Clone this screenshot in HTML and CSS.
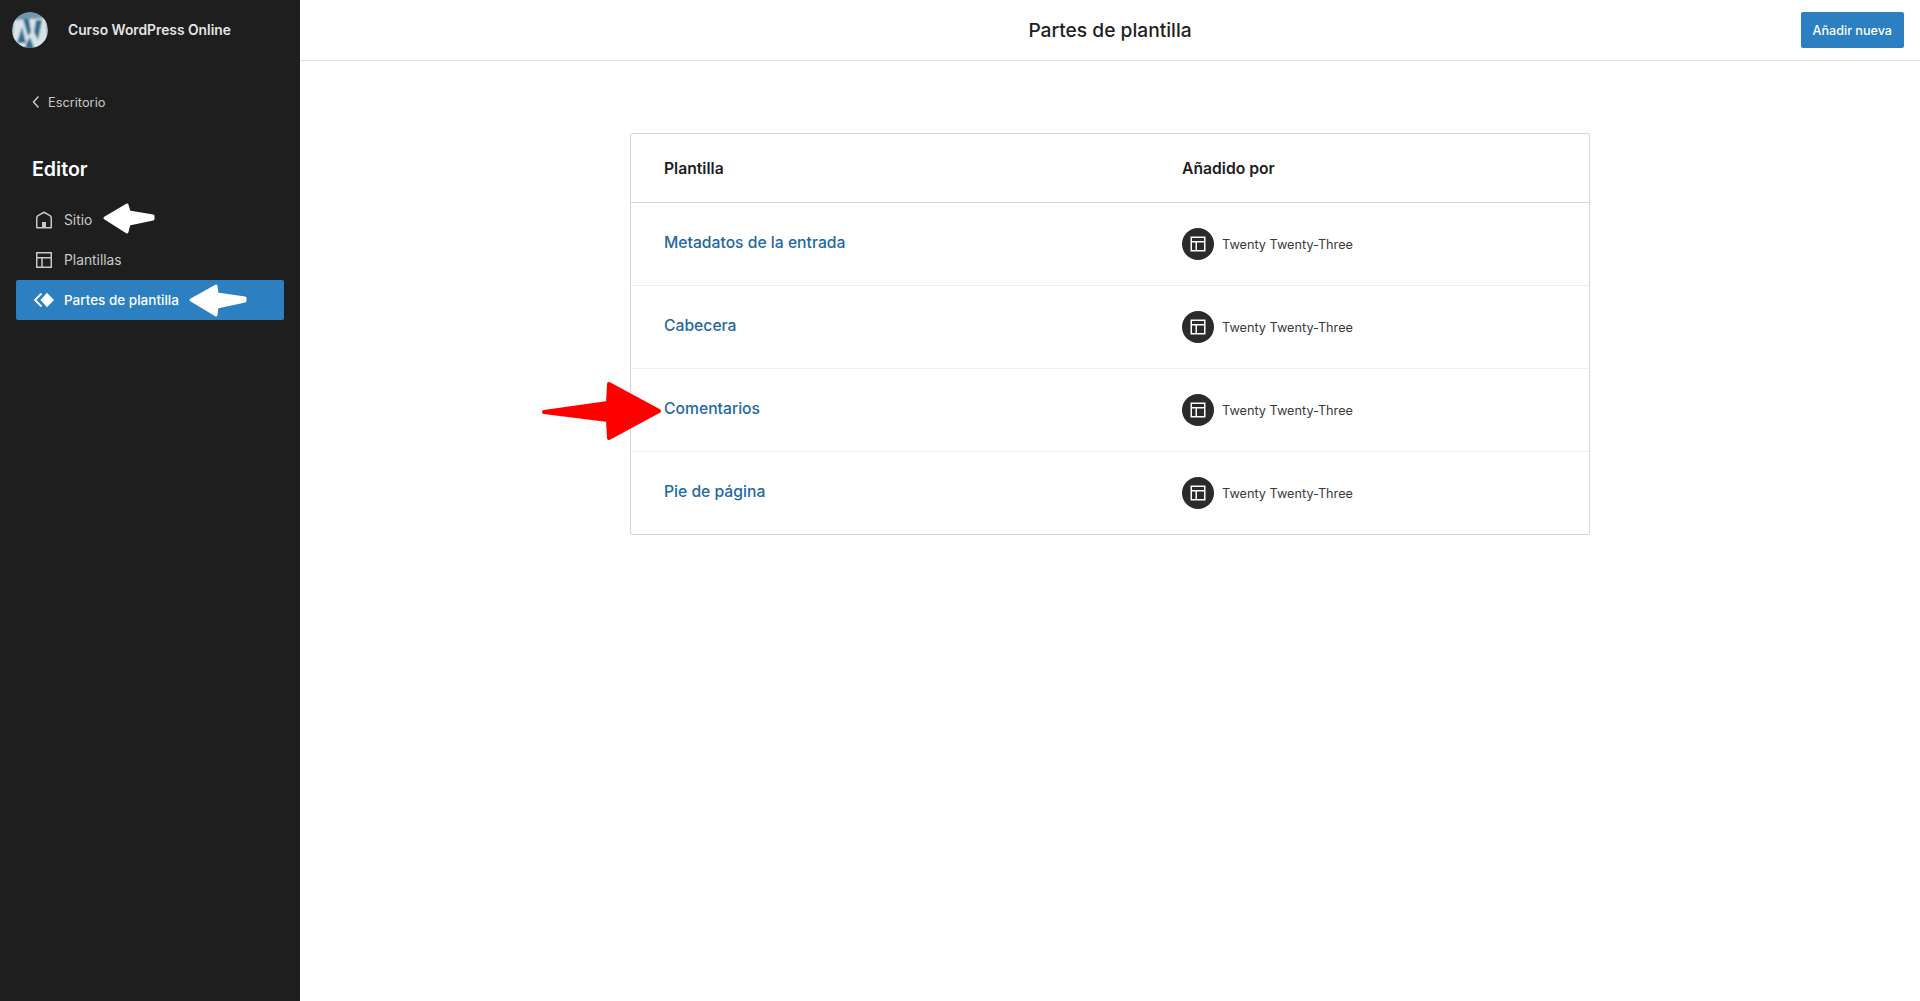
FILE: index.html
```html
<!DOCTYPE html>
<html lang="en">
<head>
    <meta charset="UTF-8">
    <title>Partes de plantilla</title>
    <link rel="stylesheet" href="styles.css">
</head>
<body>
    <div class="page">
        <aside class="sidebar">
            <div class="site">
                <svg class="site-logo" width="36" height="36" viewBox="0 0 36 36">
                    <defs>
                        <filter id="soft"><feGaussianBlur stdDeviation="0.9"/></filter>
                        <clipPath id="disc"><circle cx="18" cy="18" r="18"/></clipPath>
                    </defs>
                    <g clip-path="url(#disc)">
                        <circle cx="18" cy="18" r="18" fill="#6f98a8"/>
                        <g filter="url(#soft)">
                            <path d="M2 8 L34 6 L36 30 L30 36 L6 36 L0 28 Z" fill="#d8e4e9"/>
                            <path d="M11 7 L17 7 L19 20 L16 24 Z" fill="#2f6d8e"/>
                            <path d="M10 15 L14 31 L5 31 Z" fill="#2f6d8e"/>
                            <path d="M24 8 L30 8 L26 28 L22 20 Z" fill="#2f6d8e"/>
                            <path d="M15 30 L18 25 L22 36 L13 36 Z" fill="#2f6d8e"/>
                        </g>
                    </g>
                </svg>
                <span class="site-name">Curso WordPress Online</span>
            </div>
            <a class="back" href="#">
                <svg width="10" height="14" viewBox="0 0 10 14"><path d="M7.5 1.5 L2.5 7 L7.5 12.5" fill="none" stroke="#c8c8c8" stroke-width="1.5"/></svg>
                Escritorio
            </a>
            <h2 class="sidebar-title">Editor</h2>
            <nav class="menu">
                <a class="menu-item" href="#">
                    <svg width="24" height="24" viewBox="0 0 24 24"><path d="M4.75 19.75 V10 Q4.75 8.5 6 7.6 L12 4.25 L18 7.6 Q19.25 8.5 19.25 10 V19.75 Z" fill="none" stroke="#c8c8c8" stroke-width="1.5" stroke-linejoin="round"/><rect x="10" y="14" width="4" height="6" fill="#c8c8c8"/></svg>
                    Sitio
                </a>
                <a class="menu-item" href="#">
                    <svg width="24" height="24" viewBox="0 0 24 24"><path d="M4.75 4.75 H19.25 V19.25 H4.75 Z M4.75 9.75 H19.25 M10 9.75 V19.25" fill="none" stroke="#c8c8c8" stroke-width="1.5"/></svg>
                    Plantillas
                </a>
                <a class="menu-item active" href="#">
                    <svg width="24" height="24" viewBox="0 0 24 24"><path d="M15 4.75 L22 12 L15 19.25 L8.5 12 Z" fill="#fff"/><path d="M9.5 5.5 L3 12 L9.5 18.5" fill="none" stroke="#fff" stroke-width="1.8"/></svg>
                    Partes de plantilla
                </a>
            </nav>
            <svg class="arrow arrow-site" width="54" height="32" viewBox="0 0 54 32"><path d="M3 16 L25 3 L27 10 L51 14 L51 17 L27 22 L25 30 Z" fill="#fff" stroke="#fff" stroke-width="3" stroke-linejoin="round"/></svg>
            <svg class="arrow arrow-parts" width="60" height="34" viewBox="0 0 60 34"><path d="M3 17 L28 3 L29 11 L57 15 L57 18 L29 24 L28 32 Z" fill="#fff" stroke="#fff" stroke-width="3" stroke-linejoin="round"/></svg>
        </aside>
        <main class="content">
            <header class="topbar">
                <h1>Partes de plantilla</h1>
                <a class="add-new" href="#">Añadir nueva</a>
            </header>
            <div class="table-wrap">
                <table class="parts">
                    <thead>
                        <tr><th class="col-name">Plantilla</th><th>Añadido por</th></tr>
                    </thead>
                    <tbody>
                        <tr>
                            <td class="col-name"><a href="#">Metadatos de la entrada</a></td>
                            <td><div class="author"><span class="author-icon"><svg width="24" height="24" viewBox="0 0 24 24"><path d="M5.25 5.25 H18.75 V18.75 H5.25 Z M5.25 9.75 H18.75 M10.25 9.75 V18.75" fill="none" stroke="#fff" stroke-width="1.5"/></svg></span>Twenty Twenty-Three</div></td>
                        </tr>
                        <tr>
                            <td class="col-name"><a href="#">Cabecera</a></td>
                            <td><div class="author"><span class="author-icon"><svg width="24" height="24" viewBox="0 0 24 24"><path d="M5.25 5.25 H18.75 V18.75 H5.25 Z M5.25 9.75 H18.75 M10.25 9.75 V18.75" fill="none" stroke="#fff" stroke-width="1.5"/></svg></span>Twenty Twenty-Three</div></td>
                        </tr>
                        <tr>
                            <td class="col-name"><a href="#">Comentarios</a></td>
                            <td><div class="author"><span class="author-icon"><svg width="24" height="24" viewBox="0 0 24 24"><path d="M5.25 5.25 H18.75 V18.75 H5.25 Z M5.25 9.75 H18.75 M10.25 9.75 V18.75" fill="none" stroke="#fff" stroke-width="1.5"/></svg></span>Twenty Twenty-Three</div></td>
                        </tr>
                        <tr>
                            <td class="col-name"><a href="#">Pie de página</a></td>
                            <td><div class="author"><span class="author-icon"><svg width="24" height="24" viewBox="0 0 24 24"><path d="M5.25 5.25 H18.75 V18.75 H5.25 Z M5.25 9.75 H18.75 M10.25 9.75 V18.75" fill="none" stroke="#fff" stroke-width="1.5"/></svg></span>Twenty Twenty-Three</div></td>
                        </tr>
                    </tbody>
                </table>
                <svg class="arrow arrow-red" width="122" height="60" viewBox="0 0 122 60"><path d="M3 31 L67 22 L68 3 L118 30 L68 57 L67 39 Z" fill="#ff0000" stroke="#ff0000" stroke-width="4" stroke-linejoin="round"/></svg>
            </div>
        </main>
    </div>
</body>
</html>
```

FILE: styles.css
```css
* {
    box-sizing: border-box;
}
body {
    margin: 0;
    font-family: Inter, "Liberation Sans", sans-serif;
    background-color: #fff;
    color: #1e1e1e;
}
a {
    text-decoration: none;
}
.page {
    display: flex;
    height: 1001px;
}
.sidebar {
    position: relative;
    width: 300px;
    flex-shrink: 0;
    background-color: #1e1e1e;
}
.site {
    display: flex;
    align-items: center;
    height: 60px;
    padding: 0 0 1px 12px;
}
.site-logo {
    margin-right: 20px;
}
.site-name {
    color: #e4e4e4;
    font-size: 13.8px;
    font-weight: 600;
}
.back {
    display: flex;
    align-items: center;
    gap: 7px;
    margin-top: 30px;
    padding-left: 31px;
    height: 24px;
    color: #c8c8c8;
    font-size: 12.8px;
}
.sidebar-title {
    margin: 0;
    padding: 41px 0 0 32px;
    color: #fff;
    font-size: 19.6px;
    line-height: 28px;
    font-weight: 600;
}
.menu {
    display: flex;
    flex-direction: column;
    margin: 17px 16px 0;
}
.menu-item {
    display: flex;
    align-items: center;
    gap: 8px;
    height: 40px;
    padding-left: 16px;
    border-radius: 2px;
    color: #c8c8c8;
    font-size: 13.8px;
}
.menu-item.active {
    background-color: #2c7fc0;
    color: #fff;
    font-size: 13.5px;
    font-weight: 500;
}
.arrow {
    position: absolute;
}
.arrow-site {
    left: 102px;
    top: 202px;
}
.arrow-parts {
    left: 188px;
    top: 283px;
}
.arrow-red {
    left: -89px;
    top: 248px;
}
.content {
    flex: 1;
}
.topbar {
    position: relative;
    display: flex;
    align-items: center;
    justify-content: center;
    height: 61px;
    border-bottom: 1px solid #e0e0e0;
}
.topbar h1 {
    margin: 0;
    font-size: 19.2px;
    font-weight: 500;
}
.add-new {
    position: absolute;
    right: 16px;
    top: 12px;
    display: flex;
    align-items: center;
    height: 36px;
    padding: 0 12px;
    border-radius: 2px;
    background-color: #2c7fc0;
    color: #fff;
    font-size: 12.6px;
    font-weight: 500;
}
.table-wrap {
    position: relative;
    width: 960px;
    margin: 72px auto 0;
}
.parts {
    width: 100%;
    border-collapse: separate;
    border-spacing: 0;
    border: 1px solid #d6d6d6;
    border-radius: 2px;
    table-layout: fixed;
}
.parts th,
.parts td {
    padding: 0 0 0 33px;
    text-align: left;
}
.parts th {
    height: 69px;
    border-bottom: 1px solid #d6d6d6;
    font-size: 15.7px;
    font-weight: 600;
}
.parts td {
    height: 83px;
    border-bottom: 1px solid #eee;
}
.parts tbody tr:last-child td {
    height: 82px;
    border-bottom: 0;
}
.col-name {
    width: 518px;
}
.parts td a {
    position: relative;
    top: -2px;
    color: #2368a2;
    font-size: 15.7px;
    font-weight: 500;
}
.author {
    display: flex;
    align-items: center;
    gap: 8px;
    color: #3a3a3a;
    font-size: 12.7px;
}
.author-icon {
    display: flex;
    align-items: center;
    justify-content: center;
    width: 32px;
    height: 32px;
    border-radius: 50%;
    background-color: #2b2b2b;
}
```
